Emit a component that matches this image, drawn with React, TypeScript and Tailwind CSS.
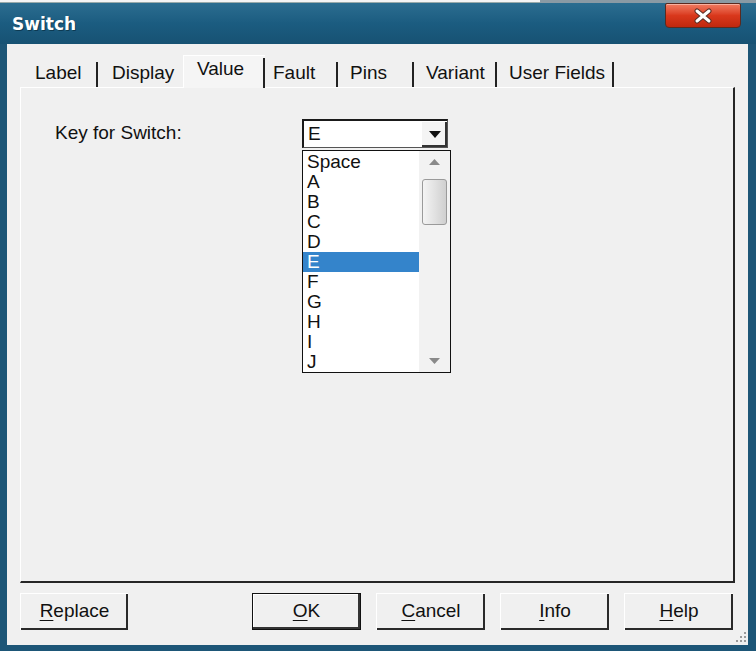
import React from 'react';

const tabs = [
  { name: 'Label', cls: 'w-[78px] pl-[15px]', sep: true },
  { name: 'Display', cls: 'w-[85px] pl-[14px]', sep: false },
  { name: 'Value', cls: 'w-[82px] pl-[13px]', sep: true, active: true },
  { name: 'Fault', cls: 'w-[73px] pl-[8px]', sep: true },
  { name: 'Pins', cls: 'w-[76px] pl-[12px]', sep: true },
  { name: 'Variant', cls: 'w-[83px] pl-[12px]', sep: true },
  { name: 'User Fields', cls: 'w-[117px] pl-[12px]', sep: true },
];

const keys = ['Space', 'A', 'B', 'C', 'D', 'E', 'F', 'G', 'H', 'I', 'J'];

const Btn = ({ first, rest, isDefault, className }: any) => (
  <div
    className={`h-[37px] flex items-center justify-center bg-[#f0f0f0] text-[19px] text-[#111] ${
      isDefault
        ? 'border border-[#111] shadow-[inset_-2px_-2px_0_#333,inset_1px_1px_0_#fff]'
        : 'border-t border-l border-[#fff] shadow-[inset_-2px_-2px_0_#2a2a2a]'
    } ${className}`}
  >
    <span className="-mt-[1px]">
      <span className="underline underline-offset-[3px]">{first}</span>
      {rest}
    </span>
  </div>
);

export default function App() {
  return (
    <div className="w-[756px] h-[651px] flex flex-col overflow-hidden font-['Liberation_Sans',Arial,sans-serif] bg-[#1c5677]">
      <div className="h-[3px] flex shrink-0">
        <div className="w-[540px] bg-[#f4f4f4] border-b border-[#9aa]" />
        <div className="flex-1 bg-[#8a9aa4]" />
      </div>

      <div className="flex-1 flex flex-col bg-[#1d5677]">
        {/* title bar */}
        <div className="h-[41px] shrink-0 flex items-start justify-between bg-gradient-to-b from-[#2b6d90] via-[#1b5c80] to-[#175273]">
          <div className="pl-[12px] pt-[11px] text-white text-[17px] font-bold font-['DejaVu_Sans',sans-serif] leading-[20px] [text-shadow:1px_1px_0_#0d3a52]">
            Switch
          </div>
          <div className="mr-[15px] w-[76px] h-[25px] rounded-b-[4px] rounded-t-[2px] border border-[#5a2a20] bg-gradient-to-b from-[#f07a60] via-[#d9381c] to-[#c0280e] flex items-center justify-center shadow-[inset_0_1px_0_#f8b0a0]">
            <svg width="22" height="16" viewBox="0 0 22 16">
              <path d="M5 3 L17 13 M17 3 L5 13" stroke="#5a3028" strokeWidth="5" strokeLinecap="round" />
              <path d="M5 3 L17 13 M17 3 L5 13" stroke="#ffffff" strokeWidth="3" strokeLinecap="round" />
            </svg>
          </div>
        </div>

        {/* client */}
        <div className="flex-1 ml-[7px] mr-[8px] mb-[6px] bg-[#f0f0f0] relative flex flex-col pt-[11px] px-[13px] text-[#111]">
          <div className="h-[32px] flex items-end relative z-10 shrink-0">
            {tabs.map((t) => (
              <div
                key={t.name}
                className={`${t.cls} relative flex items-center text-[19px] ${
                  t.active
                    ? 'h-[33px] -mb-[1px] bg-[#f5f5f5] border-t border-l border-white pb-[6px]'
                    : 'h-[28px] pt-[1px]'
                }`}
              >
                {t.name}
                {t.sep && (
                  <div
                    className={`absolute right-0 bottom-0 w-[2px] bg-[#222] ${t.active ? 'top-[2px]' : 'top-[3px]'}`}
                  />
                )}
              </div>
            ))}
          </div>

          <div className="h-[496px] shrink-0 border-t border-l border-white border-r-2 border-b-2 border-r-[#262626] border-b-[#262626] pt-[31px]">
            <div className="flex items-start">
              <div className="w-[281px] pl-[34px] h-[29px] flex items-center text-[19px]">Key for Switch:</div>
              <div className="relative">
                <div className="w-[146px] h-[29px] flex bg-white border-t-2 border-l-2 border-[#1a1a1a] border-r border-b border-r-[#555] border-b-[#555]">
                  <div className="flex-1 pl-[4px] text-[19px] leading-[25px]">E</div>
                  <div className="w-[26px] h-full flex items-center justify-center bg-[#f4f4f4] border-t border-l border-white shadow-[inset_-2px_-2px_0_#333]">
                    <svg width="12" height="7" viewBox="0 0 12 7">
                      <path d="M0 0 H12 L6 7 Z" fill="#111" />
                    </svg>
                  </div>
                </div>

                <div className="absolute top-[31px] left-0 w-[149px] h-[223px] border border-[#111] bg-white flex z-20">
                  <div className="flex-1 pt-[1px]">
                    {keys.map((k) => (
                      <div
                        key={k}
                        className={`h-[20px] leading-[20px] pl-[4px] text-[19px] ${
                          k === 'E' ? 'bg-[#3484cb] text-white' : 'text-[#111]'
                        }`}
                      >
                        {k}
                      </div>
                    ))}
                  </div>
                  <div className="w-[31px] bg-[#f2f2f2] flex flex-col items-center">
                    <div className="h-[22px] flex items-center justify-center">
                      <svg width="11" height="6" viewBox="0 0 11 6">
                        <path d="M0 6 L5.5 0 L11 6 Z" fill="#8a8a8a" />
                      </svg>
                    </div>
                    <div className="mt-[6px] w-[25px] h-[46px] rounded-[3px] border border-[#9a9a9a] bg-gradient-to-r from-[#f4f4f4] via-[#e2e2e2] to-[#cfcfcf]" />
                    <div className="flex-1" />
                    <div className="h-[22px] flex items-center justify-center">
                      <svg width="11" height="6" viewBox="0 0 11 6">
                        <path d="M0 0 L5.5 6 L11 0 Z" fill="#8a8a8a" />
                      </svg>
                    </div>
                  </div>
                </div>
              </div>
            </div>
          </div>

          <div className="mt-[10px] flex shrink-0">
            <Btn first="R" rest="eplace" className="w-[108px]" />
            <div className="ml-auto mr-[2px] flex gap-[15px]">
              <Btn first="O" rest="K" isDefault className="w-[109px]" />
              <Btn first="C" rest="ancel" className="w-[109px]" />
              <Btn first="I" rest="nfo" className="w-[109px]" />
              <Btn first="H" rest="elp" className="w-[109px]" />
            </div>
          </div>

          <svg className="absolute right-[1px] bottom-[2px]" width="13" height="13" viewBox="0 0 13 13">
            {[
              [10, 2],
              [6, 6],
              [10, 6],
              [2, 10],
              [6, 10],
              [10, 10],
            ].map(([x, y]) => (
              <rect key={`${x}-${y}`} x={x} y={y} width="2" height="2" fill="#9a9a9a" />
            ))}
          </svg>
        </div>
      </div>
    </div>
  );
}
